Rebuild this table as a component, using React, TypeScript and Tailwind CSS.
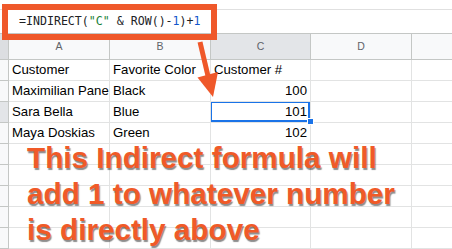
import { FC } from 'react';

type Row = { a?: string; b?: string; c?: string; num?: boolean };

const rows: Row[] = [
    { a: 'Customer', b: 'Favorite Color', c: 'Customer #' },
    { a: 'Maximilian Pane', b: 'Black', c: '100', num: true },
    { a: 'Sara Bella', b: 'Blue', c: '101', num: true },
    { a: 'Maya Doskias', b: 'Green', c: '102', num: true },
    {},
    {},
    {},
    {},
    {},
];

const cols = ['A', 'B', 'C', 'D', ''];

const cell = 'h-[21px] border-r border-b border-[#e2e3e3] overflow-hidden whitespace-nowrap px-[3px] flex items-center';

const App: FC = () => {
    return (
        <div className="relative w-[452px] h-[249px] overflow-hidden bg-white text-[#000] font-['Liberation_Sans',Arial,sans-serif]">
            {/* toolbar remnant */}
            <div className="h-[10px] border-b border-[#e0e0e0]" />

            {/* formula bar */}
            <div className="h-[24px] border-b border-[#c4c7c5] flex items-center pl-[19px] pt-[1px] font-['DejaVu_Sans_Mono',monospace] text-[11.6px] text-[#202124]">
                <span>=INDIRECT(</span>
                <span className="text-[#188038]">"C"</span>
                <span className="whitespace-pre"> &amp; ROW()-</span>
                <span className="text-[#1155cc]">1</span>
                <span>)+</span>
                <span className="text-[#1155cc]">1</span>
            </div>

            {/* grid */}
            <div className="grid grid-cols-[9px_101px_101px_100px_101px_101px]">
                <div className="h-[26px] bg-[#dcdee1] border-r border-b border-[#c4c7c5]" />
                {cols.map((c, i) => (
                    <div
                        key={i}
                        className={`h-[26px] border-r border-b border-[#c4c7c5] flex items-center justify-center text-[10.5px] text-[#5f6368] ${c === 'C' ? 'bg-[#e3e5e8]' : 'bg-[#f8f9fa]'}`}
                    >
                        {c}
                    </div>
                ))}

                {rows.map((r, i) => (
                    <div key={i} className="contents">
                        <div className={`h-[21px] border-r border-b border-[#c4c7c5] ${i === 2 ? 'bg-[#e3e5e8]' : 'bg-[#f8f9fa]'}`} />
                        <div className={`${cell} text-[13.2px]`}>{r.a}</div>
                        <div className={`${cell} text-[13.2px]`}>{r.b}</div>
                        <div className={`${cell} text-[13.2px] relative ${r.num ? 'justify-end' : ''}`}>
                            {r.c}
                            {i === 2 && (
                                <div className="absolute top-[-1px] left-[-1px] right-0 bottom-0 border-2 border-[#1a73e8]" />
                            )}
                        </div>
                        <div className={cell} />
                        <div className={cell} />
                    </div>
                ))}
            </div>

            {/* fill handle */}
            <div className="absolute left-[307px] top-[118px] w-[7px] h-[7px] bg-[#1a73e8] border border-white" />

            {/* annotation: box round formula */}
            <div className="absolute left-[2px] top-[4px] w-[215px] h-[36px] border-[6px] border-[#ef582a]" />

            {/* annotation: arrow */}
            <svg className="absolute left-0 top-0" width="452" height="249" viewBox="0 0 452 249">
                <line x1="200" y1="42" x2="208" y2="76" stroke="#ef582a" strokeWidth="5" />
                <polygon points="197.5,77.5 218,72 213,97" fill="#ef582a" />
            </svg>

            {/* annotation: caption */}
            <div className="absolute left-[27px] top-[140px] font-['Liberation_Sans',Arial,sans-serif] font-bold text-[29.7px] leading-[36px] text-[#f05a28] [text-shadow:1px_2px_1px_rgba(0,0,0,0.45)]">
                This Indirect formula will
                <br />
                add 1 to whatever number
                <br />
                is directly above
            </div>
        </div>
    );
};

export default App;
